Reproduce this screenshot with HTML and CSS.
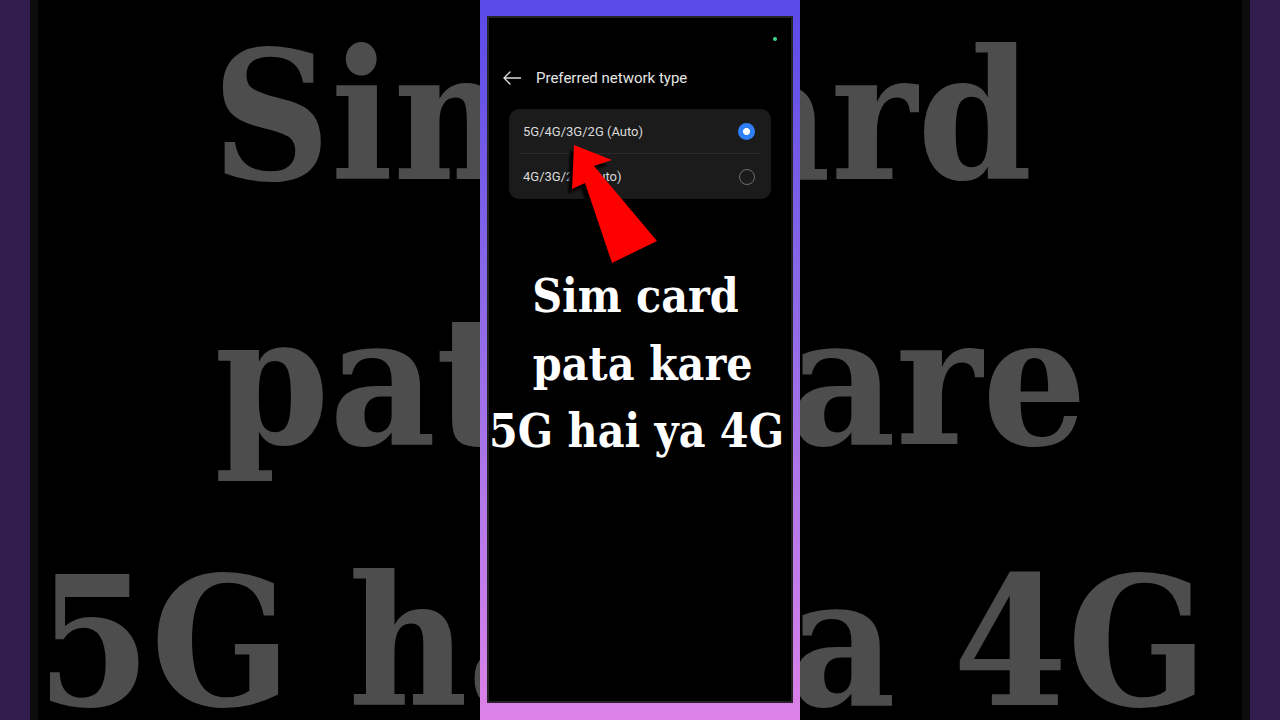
FILE: index.html
```html
<!DOCTYPE html>
<html>
<head>
<meta charset="utf-8">
<link rel="stylesheet" href="styles.css">
</head>
<body>
<div class="page">
  <div class="video">
    <div class="bg-layer">
      <div class="caption caption-bg">
        <div class="line">Sim card</div>
        <div class="line"> pata kare</div>
        <div class="line">5G hai ya 4G</div>
      </div>
    </div>
    <div class="phone">
      <div class="screen">
        <div class="status"><span class="dot"></span></div>
        <div class="header">
          <svg class="back" width="18" height="14" viewBox="0 0 18 14"><path d="M7 1 L1 7 L7 13 M1 7 H18" fill="none" stroke="#dcdcdc" stroke-width="1.4" stroke-linecap="round" stroke-linejoin="round"/></svg>
          <span class="title">Preferred network type</span>
        </div>
        <div class="card">
          <div class="row">
            <span class="label">5G/4G/3G/2G (Auto)</span>
            <span class="radio on"></span>
          </div>
          <div class="divider"></div>
          <div class="row">
            <span class="label">4G/3G/2G (Auto)</span>
            <span class="radio"></span>
          </div>
        </div>
        <div class="caption caption-fg">
          <div class="line">Sim card</div>
          <div class="line"> pata kare</div>
          <div class="line">5G hai ya 4G</div>
        </div>
      </div>
    </div>
  </div>
</div>
<svg class="arrow" width="1280" height="720" viewBox="0 0 1280 720">
  <defs>
    <filter id="blur" x="-20%" y="-20%" width="140%" height="140%"><feGaussianBlur stdDeviation="1.2"/></filter>
  </defs>
  <polygon transform="translate(-4,5)" filter="url(#blur)" fill="#000" points="574,145 612,160 594,166 657,241 612,263 585,183 572,189"/>
  <polygon fill="#fe0000" points="574,145 612,160 594,166 657,241 612,263 585,183 572,189"/>
</svg>
</body>
</html>
```
FILE: styles.css
```css
html, body {
  margin: 0;
  padding: 0;
  width: 1280px;
  height: 720px;
  overflow: hidden;
  background: #311e4f;
}

.page {
  height: 720px;
  padding: 0 30px;
  display: flex;
}

.video {
  flex: 1;
  position: relative;
  background: #000;
  border-left: 8px solid #0d0d0d;
  border-right: 8px solid #0d0d0d;
  display: flex;
  justify-content: center;
  overflow: hidden;
}

.bg-layer {
  position: absolute;
  inset: 0;
  padding-top: 263px;
  transform: scale(3.97, 3.9);
  transform-origin: 602px 358px;
}

.caption {
  font-family: "DejaVu Serif Condensed", "DejaVu Serif", serif;
  font-stretch: condensed;
  font-weight: bold;
  font-size: 46px;
  line-height: 67.5px;
  text-align: center;
  padding-right: 9px;
}

.caption .line {
  white-space: pre;
}

.caption-bg {
  color: #4d4d4d;
}

.caption-fg {
  color: #fff;
  margin-top: 64px;
}

.phone {
  position: relative;
  z-index: 1;
  width: 320px;
  height: 720px;
  box-sizing: border-box;
  padding: 16px 7px 17px;
  background: linear-gradient(180deg, #5a4ae8 0%, #8a68e8 40%, #b478e9 70%, #dd82e8 100%);
}

.screen {
  height: 100%;
  box-sizing: border-box;
  border: 2px solid #242424;
  background: #000;
  display: flex;
  flex-direction: column;
  font-family: Roboto, "Noto Sans", sans-serif;
}

.status {
  display: flex;
  justify-content: flex-end;
  padding: 19px 14px 0 0;
}

.dot {
  width: 4px;
  height: 4px;
  border-radius: 50%;
  background: #3ddc84;
}

.header {
  margin-top: 20px;
  height: 34px;
  display: flex;
  align-items: center;
  padding-left: 14px;
  gap: 15px;
}

.title {
  color: #e6e6e6;
  font-size: 15px;
}

.card {
  margin: 14px 20px 0;
  background: #1b1b1b;
  border-radius: 10px;
  display: flex;
  flex-direction: column;
}

.row {
  height: 44px;
  display: flex;
  align-items: center;
  justify-content: space-between;
  padding: 0 16px 0 14px;
}

.row + .divider + .row {
  height: 45px;
}

.label {
  color: #dadada;
  font-size: 13px;
}

.divider {
  height: 1px;
  background: #2c2c2c;
  margin: 0 12px;
}

.radio {
  width: 16px;
  height: 16px;
  box-sizing: border-box;
  border-radius: 50%;
  border: 1.5px solid #6e6e6e;
}

.radio.on {
  border: none;
  background: radial-gradient(circle, #fff 0 3.2px, #2f7ff7 3.8px);
  width: 17px;
  height: 17px;
}

.arrow {
  position: absolute;
  left: 0;
  top: 0;
  z-index: 5;
  pointer-events: none;
}
```
